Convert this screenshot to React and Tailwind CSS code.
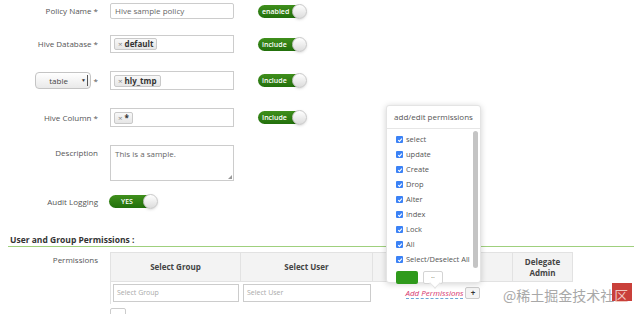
import React from 'react';

const Toggle = ({ label, className = '' }) => (
    <div className={`relative flex items-center h-[13px] w-[47px] rounded-full bg-gradient-to-b from-[#3f8f1c] to-[#22700c] ${className}`}>
        <span className="pl-[4px] text-white text-[7px] leading-none font-semibold">{label}</span>
        <span className="absolute right-[-2px] top-[-1px] h-[15px] w-[15px] rounded-full bg-gradient-to-b from-white to-[#dcdcdc] border border-[#c8c8c8] shadow-sm" />
    </div>
);

const Tag = ({ text }) => (
    <span className="flex items-center h-[12px] px-[3px] gap-[2px] rounded-[2px] border border-[#c9c9c9] bg-gradient-to-b from-[#f8f8f8] to-[#e6e6e6] text-[8px] font-bold text-[#333] leading-none">
        <span className="text-[#888] font-normal">×</span>
        {text}
    </span>
);

const Check = ({ label }) => (
    <div className="flex items-center gap-[3px] h-[15px] whitespace-nowrap">
        <span className="flex items-center justify-center shrink-0 w-[7px] h-[7px] rounded-[1px] bg-[#3b82f6]">
            <svg viewBox="0 0 10 10" className="w-[6px] h-[6px]">
                <path d="M2 5.2 L4.2 7.4 L8 2.8" fill="none" stroke="white" strokeWidth="1.8" />
            </svg>
        </span>
        <span>{label}</span>
    </div>
);

const Row = ({ label, children, className = '' }) => (
    <div className={`flex items-center ${className}`}>
        <div className="w-[98px] text-right">{label}</div>
        {children}
    </div>
);

export default function App() {
    const perms = ['select', 'update', 'Create', 'Drop', 'Alter', 'Index', 'Lock', 'All', 'Select/Deselect All'];
    return (
        <div className="relative w-[634px] h-[314px] overflow-hidden bg-white text-[8px] text-[#555] font-['Open_Sans',sans-serif]">
            <div className="pt-[3px]">
                <Row label="Policy Name *" className="h-[16px]">
                    <div className="ml-[12px] w-[124px] h-[16px] border border-[#ccc] rounded-[2px] flex items-center px-[4px] text-[#666]">
                        Hive sample policy
                    </div>
                    <Toggle label="enabled" className="ml-[24px]" />
                </Row>

                <Row label="Hive Database *" className="mt-[16px] h-[18px]">
                    <div className="ml-[12px] w-[124px] h-[18px] border border-[#ccc] flex items-center px-[3px]">
                        <Tag text="default" />
                    </div>
                    <Toggle label="include" className="ml-[24px]" />
                </Row>

                <div className="mt-[18px] h-[19px] flex items-center">
                    <div className="w-[98px] flex justify-end items-center gap-[3px]">
                        <div className="relative w-[56px] h-[17px] rounded-[4px] border border-[#c4c4c4] bg-gradient-to-b from-white to-[#e9e9e9] flex items-center justify-center text-[#444]">
                            <span className="pr-[8px]">table</span>
                            <span className="absolute right-[2px] top-[2px] h-[11px] w-[7px] border-r border-[#555] flex items-center justify-center text-[5px] text-[#333]">▼</span>
                        </div>
                        <span>*</span>
                    </div>
                    <div className="ml-[12px] w-[124px] h-[19px] border border-[#ccc] flex items-center px-[3px]">
                        <Tag text="hly_tmp" />
                    </div>
                    <Toggle label="include" className="ml-[24px]" />
                </div>

                <Row label="Hive Column *" className="mt-[18px] h-[19px]">
                    <div className="ml-[12px] w-[124px] h-[19px] border border-[#ccc] flex items-center px-[3px]">
                        <Tag text="*" />
                    </div>
                    <Toggle label="Include" className="ml-[24px]" />
                </Row>

                <div className="mt-[18px] flex items-start h-[36px]">
                    <div className="w-[98px] text-right pt-[2px]">Description</div>
                    <div className="relative ml-[12px] w-[124px] h-[36px] border border-[#ccc] px-[4px] pt-[2px] text-[#666]">
                        This is a sample.
                        <span className="absolute right-[1px] bottom-[1px] w-0 h-0 border-l-[4px] border-l-transparent border-b-[4px] border-b-[#999]" />
                    </div>
                </div>

                <Row label="Audit Logging" className="mt-[14px] h-[13px]">
                    <Toggle label="YES" className="ml-[11px] pl-[8px]" />
                </Row>

                <div className="mt-[26px] ml-[8px] border-b border-[#9fd07d] h-[13px]">
                    <div className="pl-[2px] text-[8.5px] font-bold text-[#333] leading-[11px]">User and Group Permissions :</div>
                </div>

                <div className="mt-[5px] flex items-start">
                    <div className="w-[98px] text-right pt-[2px]">Permissions</div>
                    <div className="ml-[12px] border-t border-l border-[#e2e2e2]">
                        <div className="flex h-[29px] bg-[#f3f3f3] text-[#444] font-bold">
                            <div className="w-[130px] border-r border-b border-[#e2e2e2] flex items-center justify-center">Select Group</div>
                            <div className="w-[132px] border-r border-b border-[#e2e2e2] flex items-center justify-center">Select User</div>
                            <div className="w-[140px] border-r border-b border-[#e2e2e2]" />
                            <div className="w-[60px] border-r border-b border-[#e2e2e2] flex items-center justify-center text-center leading-[11px]">Delegate<br />Admin</div>
                        </div>
                        <div className="flex h-[22px] items-center">
                            <div className="w-[130px] px-[2px]">
                                <div className="h-[18px] border border-[#ccc] flex items-center px-[3px] text-[#aaa] text-[7px]">Select Group</div>
                            </div>
                            <div className="w-[132px] px-[2px]">
                                <div className="h-[18px] border border-[#ccc] flex items-center px-[3px] text-[#aaa] text-[7px]">Select User</div>
                            </div>
                            <div className="w-[140px] flex items-center justify-center gap-[2px]">
                                <span className="italic text-[#d6336c] border-b border-dashed border-[#6aa6d6] leading-[10px]">Add Permissions</span>
                                <span className="w-[15px] h-[12px] border border-[#ccc] rounded-[2px] bg-[#f4f4f4] flex items-center justify-center font-bold text-[#333]">+</span>
                            </div>
                            <div className="w-[60px]" />
                        </div>
                    </div>
                </div>
                <div className="ml-[110px] mt-[4px] w-[16px] h-[10px] border border-[#ccc] rounded-[2px]" />
            </div>

            <div className="absolute left-[386px] top-[105px] w-[95px] h-[178px] bg-white rounded-[3px] border border-[#e4e4e4] shadow-[0_1px_6px_rgba(0,0,0,0.18)]">
                <div className="h-[23px] flex items-center justify-center border-b border-[#e6e6e6] text-[#555]">add/edit permissions</div>
                <div className="flex">
                    <div className="pl-[9px] pt-[3px] flex-1 min-w-0 text-[#555] text-[7.5px]">
                        {perms.map((p) => <Check key={p} label={p} />)}
                        <div className="flex gap-[5px] mt-[4px]">
                            <div className="w-[22px] h-[13px] bg-[#2f9a1c] rounded-[2px]" />
                            <div className="w-[20px] h-[13px] border border-[#d4d4d4] rounded-[2px] bg-white flex items-start justify-center leading-[6px] text-[#666]">..</div>
                        </div>
                    </div>
                    <div className="w-[5px] mr-[2px] mt-[2px] h-[137px] bg-[#c4c4c4] rounded-full" />
                </div>
                <span className="absolute left-[44px] bottom-[-5px] w-[8px] h-[8px] bg-white rotate-45 border-r border-b border-[#e4e4e4]" />
            </div>

            <div className="absolute left-[503px] top-[288px] flex items-center text-[14px] text-[#a8a8a8] font-['Noto_Sans_CJK_SC',sans-serif] leading-none">
                <span>@稀土掘金技术社</span>
                <span className="relative">
                    <span className="absolute left-[-2px] top-[-5px] w-[20px] h-[18px] bg-[#c9403a]" />
                    <span className="relative text-[#f0c8c0]">区</span>
                </span>
            </div>
        </div>
    );
}
